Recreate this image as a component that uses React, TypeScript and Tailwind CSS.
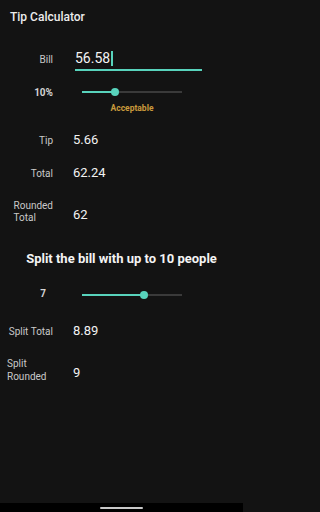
const font = { fontFamily: "Roboto, 'Liberation Sans', sans-serif" };

function Slider({ pct }: { pct: number }) {
  return (
    <div className="relative h-[8px] w-[100px]">
      <div className="absolute left-0 right-0 top-[3px] h-[2px] bg-[#3a3a3a]" />
      <div className="absolute left-0 top-[3px] h-[2px] bg-[#58d3bc]" style={{ width: `${pct}%` }} />
      <div
        className="absolute top-0 h-[8px] w-[8px] -translate-x-1/2 rounded-full bg-[#58d3bc]"
        style={{ left: `${pct}%` }}
      />
    </div>
  );
}

function Row({ label, value, top }: { label: string; value: string; top: string }) {
  return (
    <div className={`flex h-[16px] items-center ${top}`}>
      <div className="w-[53px] text-right text-[10px] text-[#c9c9c9]">{label}</div>
      <div className="ml-[20px] text-[13px] leading-[16px] text-[#f2f2f2]">{value}</div>
    </div>
  );
}

export default function App() {
  return (
    <div className="h-[512px] w-full bg-[#131313]" style={font}>
      <div className="flex h-[512px] w-[243px] flex-col">
        <div className="flex-1">
          {/* Title */}
          <div className="pl-[10px] pt-[10px] text-[12px] font-medium leading-[14px] text-[#ececec]">
            Tip Calculator
          </div>

          {/* Bill input */}
          <div className="mt-[26px] flex h-[20px] items-start">
            <div className="w-[53px] pt-[2px] text-right text-[10px] leading-[15px] text-[#c9c9c9]">Bill</div>
            <div className="ml-[22px] flex w-[127px] items-center border-b-2 border-[#58d3bc] pb-[1.5px]">
              <span className="text-[14px] leading-[17px] text-[#f4f4f4]">56.58</span>
              <span className="ml-[0.5px] h-[15px] w-[2px] bg-[#58d3bc]" />
            </div>
          </div>

          {/* Tip percent */}
          <div className="mt-[16px] flex h-[12px] items-center">
            <div className="w-[53px] text-right text-[10px] font-bold text-[#d4d4d4]">10%</div>
            <div className="ml-[29px]">
              <Slider pct={33} />
            </div>
          </div>
          <div className="ml-[82px] mt-[5px] h-[10px] w-[100px] text-center text-[8.5px] font-bold leading-[10px] text-[#c99a3c]">
            Acceptable
          </div>

          <Row label="Tip" value="5.66" top="mt-[19px]" />
          <Row label="Total" value="62.24" top="mt-[17px]" />

          {/* Rounded total */}
          <div className="mt-[19px] flex h-[25px] items-start">
            <div className="flex w-[53px] justify-end">
              <div className="pl-[10px] text-[10px] leading-[12px] text-[#c9c9c9]">
                Rounded
                <br />
                Total
              </div>
            </div>
            <div className="ml-[20px] mt-[7px] text-[13px] leading-[16px] text-[#f2f2f2]">62</div>
          </div>

          {/* Split section */}
          <div className="mt-[26px] text-center text-[13px] font-bold leading-[16px] text-[#f4f4f4]">
            Split the bill with up to 10 people
          </div>

          <div className="mt-[20px] flex h-[12px] items-center">
            <div className="w-[46px] text-right text-[10px] font-bold text-[#d4d4d4]">7</div>
            <div className="ml-[36px] mt-[4px]">
              <Slider pct={62} />
            </div>
          </div>

          <Row label="Split Total" value="8.89" top="mt-[24px]" />

          <div className="mt-[18px] flex h-[26px] items-start">
            <div className="flex w-[53px] justify-start pl-[7px]">
              <div className="text-[10px] leading-[13px] text-[#c9c9c9]">
                Split
                <br />
                Rounded
              </div>
            </div>
            <div className="ml-[20px] mt-[8px] text-[13px] leading-[16px] text-[#f2f2f2]">9</div>
          </div>
        </div>

        {/* Nav bar */}
        <div className="flex h-[9px] items-center justify-center bg-black">
          <div className="h-[2px] w-[43px] rounded-full bg-[#c8c8c8]" />
        </div>
      </div>
    </div>
  );
}
